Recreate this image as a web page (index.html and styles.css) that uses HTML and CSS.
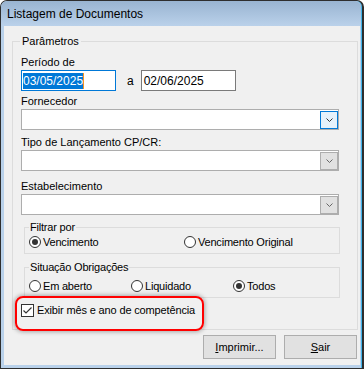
FILE: index.html
```html
<!DOCTYPE html>
<html>
<head>
  <meta charset="utf-8">
  <title>Listagem de Documentos</title>
  <link rel="stylesheet" href="styles.css">
</head>
<body>
  <div class="window">
    <div class="titlebar">Listagem de Documentos</div>
    <div class="client">
      <fieldset class="group">
        <legend>Parâmetros</legend>

        <div class="field">
          <label>Período de</label>
          <div class="period">
            <div class="edit focused"><span class="sel">03/05/2025</span></div>
            <span class="to">a</span>
            <div class="edit">02/06/2025</div>
          </div>
        </div>

        <div class="field field-fornecedor">
          <label>Fornecedor</label>
          <div class="combo">
            <span class="drop active">
              <svg width="7" height="4" viewBox="0 0 7 4"><polyline points="0.5,0.5 3.5,3.5 6.5,0.5" fill="none" stroke="#333" stroke-width="1"/></svg>
            </span>
          </div>
        </div>

        <div class="field field-tipo">
          <label>Tipo de Lançamento CP/CR:</label>
          <div class="combo">
            <span class="drop">
              <svg width="7" height="4" viewBox="0 0 7 4"><polyline points="0.5,0.5 3.5,3.5 6.5,0.5" fill="none" stroke="#666" stroke-width="1"/></svg>
            </span>
          </div>
        </div>

        <div class="field field-estab">
          <label>Estabelecimento</label>
          <div class="combo">
            <span class="drop">
              <svg width="7" height="4" viewBox="0 0 7 4"><polyline points="0.5,0.5 3.5,3.5 6.5,0.5" fill="none" stroke="#666" stroke-width="1"/></svg>
            </span>
          </div>
        </div>

        <fieldset class="subgroup filtro">
          <legend>Filtrar por</legend>
          <div class="options">
            <span class="opt opt-wide"><span class="radio checked"></span>Vencimento</span>
            <span class="opt"><span class="radio"></span>Vencimento Original</span>
          </div>
        </fieldset>

        <fieldset class="subgroup situacao">
          <legend>Situação Obrigações</legend>
          <div class="options">
            <span class="opt opt-mid"><span class="radio"></span>Em aberto</span>
            <span class="opt opt-mid"><span class="radio"></span>Liquidado</span>
            <span class="opt"><span class="radio checked"></span>Todos</span>
          </div>
        </fieldset>

        <div class="highlight">
          <span class="check">
            <svg width="11" height="11" viewBox="0 0 11 11"><polyline points="1.5,5.5 4,8 9.5,2.5" fill="none" stroke="#333" stroke-width="1.2"/></svg>
          </span>
          Exibir mês e ano de competência
        </div>
      </fieldset>

      <div class="buttons">
        <button><u>I</u>mprimir...</button>
        <button><u>S</u>air</button>
      </div>
    </div>
  </div>
</body>
</html>
```

FILE: styles.css
```css
body {
  margin: 0;
  font-family: "Liberation Sans", Arial, sans-serif;
  font-size: 11px;
  color: #000;
}
.window {
  width: 364px;
  height: 369px;
  box-sizing: border-box;
  border: 1px solid #2e2e2e;
  border-right-width: 2px;
  border-radius: 7px 7px 0 0;
  background: #b9d1ea;
  box-shadow: inset -1px 0 0 #3fb4ea;
  display: flex;
  flex-direction: column;
}
.titlebar {
  height: 25px;
  box-sizing: border-box;
  margin-right: 1px;
  padding: 2px 0 0 6px;
  border-radius: 6px 6px 0 0;
  background: linear-gradient(#99b4d1, #bad1ea);
  font-size: 12px;
  line-height: 23px;
}
.client {
  flex: 1;
  margin: 0 2px 3px 3px;
  padding: 9px 2px 0 8px;
  background: #f0f0f0;
}
fieldset {
  margin: 0;
  min-width: 0;
  border: 1px solid #dcdcdc;
}
legend {
  line-height: 12px;
}
.group {
  padding: 9px 18px 0 8px;
}
.group > legend {
  padding: 0 2px;
  margin-left: -1px;
}
.field label {
  display: block;
  line-height: 12px;
  margin-bottom: 2px;
}
.field-fornecedor { margin-top: 4px; }
.field-tipo { margin-top: 6px; }
.field-estab { margin-top: 9px; }
.period {
  display: flex;
  align-items: center;
}
.edit {
  width: 95px;
  height: 21px;
  box-sizing: border-box;
  border: 1px solid #7a7a7a;
  background: #fff;
  padding-left: 2px;
  display: flex;
  align-items: center;
  font-size: 12px;
}
.edit.focused {
  border-color: #0078d7;
  padding-left: 1px;
}
.sel {
  background: #0078d7;
  color: #fff;
  line-height: 16px;
  border-right: 1px solid #f7931e;
}
.to {
  font-size: 12px;
  margin: 0 7px 0 11px;
}
.combo {
  height: 21px;
  box-sizing: border-box;
  border: 1px solid #adadad;
  background: #fff;
  display: flex;
  justify-content: flex-end;
  align-items: flex-end;
}
.drop {
  width: 18px;
  height: 18px;
  box-sizing: border-box;
  border: 1px solid #adadad;
  background: #e1e1e1;
  display: flex;
  align-items: center;
  justify-content: center;
}
.drop.active {
  border-color: #0078d7;
  background: #e5f1fb;
}
.subgroup {
  margin: 6px -1px 0 3px;
  padding: 1px 0 4px 4px;
}
.subgroup legend {
  padding: 0 1px;
  letter-spacing: -0.2px;
}
.situacao {
  margin-top: 7px;
  padding-top: 5px;
}
.options {
  display: flex;
}
.opt {
  display: inline-flex;
  align-items: center;
  height: 15px;
  letter-spacing: -0.2px;
}
.opt-wide { width: 155px; }
.opt-mid { width: 102px; }
.radio {
  width: 12px;
  height: 12px;
  box-sizing: border-box;
  border: 1px solid #333;
  border-radius: 50%;
  background: #fff;
  margin-right: 2px;
  display: inline-flex;
  align-items: center;
  justify-content: center;
}
.radio.checked::after {
  content: "";
  width: 6px;
  height: 6px;
  border-radius: 50%;
  background: #333;
}
.highlight {
  width: 189px;
  height: 35px;
  box-sizing: border-box;
  margin: -2px 0 -2px -6px;
  padding: 6px 0 0 4px;
  border: 2px solid #f00;
  border-radius: 8px;
  box-shadow: 0 0 4px 1px rgba(0, 0, 0, 0.3);
  display: flex;
  align-items: flex-start;
  line-height: 13px;
  letter-spacing: -0.15px;
}
.check {
  width: 13px;
  height: 13px;
  box-sizing: border-box;
  border: 1px solid #333;
  background: #fff;
  margin-right: 3px;
  display: inline-flex;
}
.buttons {
  display: flex;
  justify-content: flex-end;
  gap: 8px;
  margin: 5px 1px 0 0;
}
button {
  width: 73px;
  height: 24px;
  padding: 0;
  border: 1px solid #adadad;
  background: #e1e1e1;
  font-family: "Liberation Sans", Arial, sans-serif;
  font-size: 11px;
  color: #000;
}
```
